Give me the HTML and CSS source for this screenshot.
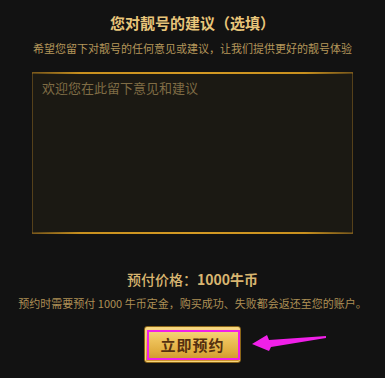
FILE: index.html
```html
<!DOCTYPE html>
<html lang="zh-CN">
<head>
<meta charset="utf-8">
<link rel="stylesheet" href="styles.css">
</head>
<body>
<main class="page">
  <h1 class="title">您对靓号的建议（选填）</h1>
  <p class="subtitle">希望您留下对靓号的任何意见或建议，让我们提供更好的靓号体验</p>
  <div class="box">
    <div class="placeholder">欢迎您在此留下意见和建议</div>
  </div>
  <p class="price"><span class="price-label">预付价格：</span><span class="price-value">1000牛币</span></p>
  <p class="note">预约时需要预付 1000 牛币定金，购买成功、失败都会返还至您的账户。</p>
  <div class="action">
    <button class="btn">立即预约</button>
    <span class="mark"></span>
    <svg class="arrow" width="80" height="20" viewBox="0 0 80 20"><polygon points="0,9 15,0 17,5 74,1 74,3 19,12 17,16" fill="#f020e8"/></svg>
  </div>
</main>
</body>
</html>
```

FILE: styles.css
```css
* { box-sizing: border-box; }
html, body { margin: 0; padding: 0; background: #121212; }
body { width: 385px; height: 378px; overflow: hidden; font-family: "Noto Sans CJK SC", "Noto Sans", sans-serif; }
.page { display: flex; flex-direction: column; align-items: center; padding-top: 13px; }
.title { margin: 0; font-size: 15px; line-height: 20px; font-weight: 700; color: #e8c57a; }
.subtitle { margin: 7px 0 0; font-size: 11px; line-height: 16px; color: #b4965a; white-space: nowrap; }
.box { position: relative; margin-top: 16px; width: 321px; height: 162px; background: #1b1913; border: 1px solid #55401a; padding: 6px 9px; }
.box::before, .box::after { content: ""; position: absolute; left: -1px; right: -1px; height: 2px; background: linear-gradient(90deg, rgba(200,140,30,0.3), #c8901e 15%, #d49a24 50%, #c8901e 85%, rgba(200,140,30,0.3)); }
.box::before { top: -1px; }
.box::after { bottom: -1px; }
.placeholder { font-size: 13px; line-height: 18px; color: #7f6c45; }
.price { margin: 35px 0 0; font-size: 14px; line-height: 20px; color: #d8b570; }
.price-label { font-weight: 500; }
.price-value { font-weight: 700; }
.note { margin: 6px 0 0; font-size: 11px; line-height: 16px; color: #ad8f55; white-space: nowrap; }
.action { position: relative; margin-top: 15px; }
.btn { display: block; width: 97px; height: 37px; border: 1px solid #8a6418; border-radius: 3px; background: linear-gradient(180deg, #f8dc8a 0%, #eec35c 35%, #e0ac3e 70%, #c9902c 100%); box-shadow: inset 0 0 0 1px #f6d67c; font-family: inherit; font-size: 15px; font-weight: 700; letter-spacing: 1px; color: #553010; padding: 0; }
.mark { position: absolute; left: 3px; top: 4px; width: 93px; height: 30px; border: 2px solid #f020e8; pointer-events: none; }
.arrow { position: absolute; left: 108px; top: 9px; }
```
